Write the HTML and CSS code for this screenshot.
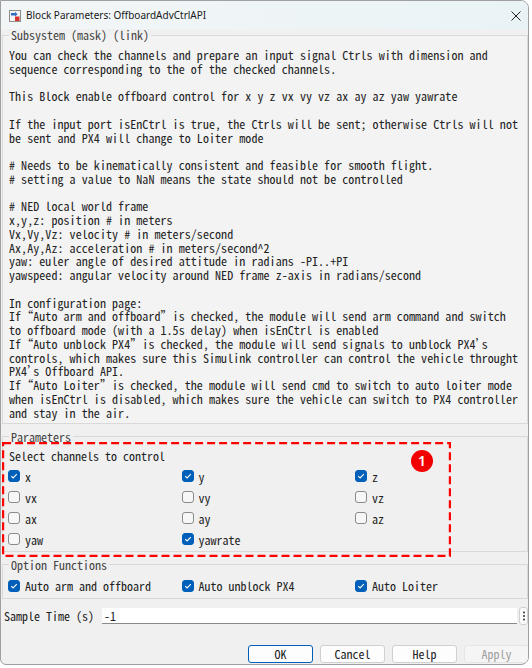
FILE: index.html
```html
<!DOCTYPE html>
<html>
<head>
<meta charset="utf-8">
<link rel="stylesheet" href="styles.css">
</head>
<body>
<div class="window">
  <div class="titlebar">
    <svg class="app-icon" width="12" height="12" viewBox="0 0 12 12">
      <rect x="0.5" y="0.5" width="11" height="11" fill="#f4f4f4" stroke="#8c8c8c"/>
      <path d="M2 3 H6 V1.8 L8.6 4.2 L6 6.6 V5.4 H2 Z" fill="#2f6fc4"/>
      <rect x="6" y="6.5" width="4.5" height="4.5" fill="#d9332b"/>
    </svg>
    <span class="title">Block Parameters: OffboardAdvCtrlAPI</span>
    <svg class="close" width="10" height="10" viewBox="0 0 10 10">
      <path d="M0.5 0.5 L9.5 9.5 M9.5 0.5 L0.5 9.5" stroke="#222" stroke-width="1"/>
    </svg>
  </div>
  <div class="content">
    <fieldset class="group desc">
      <legend>Subsystem (mask) (link)</legend>
      <div class="desc-text">You can check the channels and prepare an input signal Ctrls with dimension and
sequence corresponding to the of the checked channels.

This Block enable offboard control for x y z vx vy vz ax ay az yaw yawrate

If the input port isEnCtrl is true, the Ctrls will be sent; otherwise Ctrls will not
be sent and PX4 will change to Loiter mode

# Needs to be kinematically consistent and feasible for smooth flight.
# setting a value to NaN means the state should not be controlled

# NED local world frame
x,y,z: position # in meters
Vx,Vy,Vz: velocity # in meters/second
Ax,Ay,Az: acceleration # in meters/second^2
yaw: euler angle of desired attitude in radians -PI..+PI
yawspeed: angular velocity around NED frame z-axis in radians/second

In configuration page:
If “Auto arm and offboard” is checked, the module will send arm command and switch
to offboard mode (with a 1.5s delay) when isEnCtrl is enabled
If “Auto unblock PX4” is checked, the module will send signals to unblock PX4’s
controls, which makes sure this Simulink controller can control the vehicle throught
PX4’s Offboard API.
If “Auto Loiter” is checked, the module will send cmd to switch to auto loiter mode
when isEnCtrl is disabled, which makes sure the vehicle can switch to PX4 controller
and stay in the air.</div>
    </fieldset>

    <fieldset class="group params">
      <legend>Parameters</legend>
      <div class="sel-label">Select channels to control</div>
      <div class="cb-grid">
        <label class="cb"><span class="box on"><svg width="12" height="12" viewBox="0 0 12 12"><path d="M3.2 6.2 L5.1 8 L8.8 4.2" fill="none" stroke="#fff" stroke-width="1.1"/></svg></span>x</label>
        <label class="cb"><span class="box on"><svg width="12" height="12" viewBox="0 0 12 12"><path d="M3.2 6.2 L5.1 8 L8.8 4.2" fill="none" stroke="#fff" stroke-width="1.1"/></svg></span>y</label>
        <label class="cb"><span class="box on"><svg width="12" height="12" viewBox="0 0 12 12"><path d="M3.2 6.2 L5.1 8 L8.8 4.2" fill="none" stroke="#fff" stroke-width="1.1"/></svg></span>z</label>
        <label class="cb"><span class="box"></span>vx</label>
        <label class="cb"><span class="box"></span>vy</label>
        <label class="cb"><span class="box"></span>vz</label>
        <label class="cb"><span class="box"></span>ax</label>
        <label class="cb"><span class="box"></span>ay</label>
        <label class="cb"><span class="box"></span>az</label>
        <label class="cb"><span class="box"></span>yaw</label>
        <label class="cb"><span class="box on"><svg width="12" height="12" viewBox="0 0 12 12"><path d="M3.2 6.2 L5.1 8 L8.8 4.2" fill="none" stroke="#fff" stroke-width="1.1"/></svg></span>yawrate</label>
      </div>
    </fieldset>

    <fieldset class="group options">
      <legend>Option Functions</legend>
      <div class="cb-grid">
        <label class="cb"><span class="box on"><svg width="12" height="12" viewBox="0 0 12 12"><path d="M3.2 6.2 L5.1 8 L8.8 4.2" fill="none" stroke="#fff" stroke-width="1.1"/></svg></span>Auto arm and offboard</label>
        <label class="cb"><span class="box on"><svg width="12" height="12" viewBox="0 0 12 12"><path d="M3.2 6.2 L5.1 8 L8.8 4.2" fill="none" stroke="#fff" stroke-width="1.1"/></svg></span>Auto unblock PX4</label>
        <label class="cb"><span class="box on"><svg width="12" height="12" viewBox="0 0 12 12"><path d="M3.2 6.2 L5.1 8 L8.8 4.2" fill="none" stroke="#fff" stroke-width="1.1"/></svg></span>Auto Loiter</label>
      </div>
    </fieldset>

    <div class="sample-row">
      <span class="sample-label">Sample Time (s)</span>
      <span class="sample-input">-1</span>
      <span class="dots"><svg width="4" height="10" viewBox="0 0 4 10"><circle cx="2" cy="1.5" r="1" fill="#333"/><circle cx="2" cy="5" r="1" fill="#333"/><circle cx="2" cy="8.5" r="1" fill="#333"/></svg></span>
    </div>

    <div class="buttons">
      <span class="btn ok">OK</span>
      <span class="btn">Cancel</span>
      <span class="btn">Help</span>
      <span class="btn disabled">Apply</span>
    </div>
  </div>
</div>

<svg class="annot-box" width="449" height="115" viewBox="0 0 449 115">
  <rect x="1.1" y="1.1" width="446.8" height="112.8" fill="none" stroke="#ff0000" stroke-width="2.2" stroke-dasharray="8 4"/>
</svg>
<div class="badge">1</div>
</body>
</html>
```

FILE: styles.css
```css
html, body {
  margin: 0;
  padding: 0;
}
body {
  width: 532px;
  height: 668px;
  overflow: hidden;
  position: relative;
  background: #ffffff;
  font-family: "Noto Sans Mono CJK SC", "Liberation Mono", monospace;
  font-size: 12px;
  color: #1e1e1e;
}
.window {
  width: 529px;
  height: 665px;
  box-sizing: border-box;
  border: 1px solid #a0a0a0;
  border-radius: 0 8px 8px 6px;
  background: #f0f0f0;
  overflow: hidden;
  display: flex;
  flex-direction: column;
}
.titlebar {
  height: 28px;
  flex: none;
  display: flex;
  align-items: center;
  padding-left: 8px;
  background: linear-gradient(to right, #f3f6f7, #e9f3f6);
}
.app-icon {
  flex: none;
  margin-top: 1px;
}
.title {
  font-family: "Noto Sans", sans-serif;
  font-size: 10px;
  color: #1a1a1a;
  margin-left: 5px;
}
.close {
  margin-left: auto;
  margin-right: 7px;
  margin-top: 1px;
}
.content {
  flex: 1;
  padding: 0 0 0 1px;
  display: flex;
  flex-direction: column;
}
.group {
  margin: 0;
  min-width: 0;
  border: 1px solid #d9d9d9;
  padding: 0 6px;
}
.group legend {
  padding: 0 2px;
  line-height: 12px;
  color: #444;
}
.desc {
  padding-top: 7px;
  padding-bottom: 4px;
  background: #f3f3f3;
}
.desc-text {
  white-space: pre;
  line-height: 13.75px;
  letter-spacing: 0.06px;
  color: #222;
  font-feature-settings: "halt" 1;
}
.params {
  margin-top: 6.5px;
  padding-top: 6px;
  padding-bottom: 1.5px;
}
.sel-label {
  line-height: 14px;
  color: #222;
}
.cb-grid {
  display: grid;
  grid-template-columns: 173.5px 173.5px 1fr;
  grid-auto-rows: 21px;
  margin-left: -1px;
}
.params .cb-grid {
  margin-top: 3px;
}
.cb {
  display: flex;
  align-items: center;
  color: #222;
}
.box {
  width: 12px;
  height: 12px;
  box-sizing: border-box;
  border: 1px solid #8a8a8a;
  border-radius: 3px;
  background: #f7f7f7;
  margin-right: 5px;
  flex: none;
  display: flex;
}
.box.on {
  background: #005fb8;
  border-color: #005fb8;
}
.box svg {
  margin: -1px;
}
.options {
  margin-top: 6.5px;
  padding-top: 4.5px;
  padding-bottom: 1.5px;
}
.sample-row {
  margin-top: 8px;
  height: 18px;
  display: flex;
  align-items: center;
  padding-left: 2px;
}
.sample-label {
  width: 98px;
  color: #222;
}
.sample-input {
  width: 415px;
  height: 16px;
  box-sizing: border-box;
  background: #ffffff;
  border-bottom: 1px solid #8a8a8a;
  line-height: 16px;
  padding-left: 2px;
}
.dots {
  width: 9px;
  height: 18px;
  box-sizing: border-box;
  margin-left: 2px;
  border: 1px solid #d0d0d0;
  border-radius: 3px;
  background: #fbfbfb;
  display: flex;
  align-items: center;
  justify-content: center;
}
.buttons {
  margin-top: 19.75px;
  display: flex;
  justify-content: flex-end;
  gap: 7px;
  margin-right: -1px;
}
.btn {
  width: 65px;
  height: 18px;
  box-sizing: border-box;
  border: 1px solid #d0d0d0;
  border-radius: 3px;
  background: #fdfdfd;
  display: flex;
  align-items: center;
  justify-content: center;
  color: #222;
}
.btn.ok {
  border-color: #005fb8;
}
.btn.disabled {
  background: #f5f5f5;
  border-color: #e5e5e5;
  color: #a0a0a0;
}
.annot-box {
  position: absolute;
  left: 2px;
  top: 442px;
}
.badge {
  position: absolute;
  left: 411px;
  top: 450px;
  width: 22px;
  height: 22px;
  border-radius: 50%;
  background: #f20000;
  color: #fff;
  font-family: "Noto Sans", sans-serif;
  font-size: 14px;
  font-weight: 600;
  line-height: 22px;
  text-align: center;
}
```
